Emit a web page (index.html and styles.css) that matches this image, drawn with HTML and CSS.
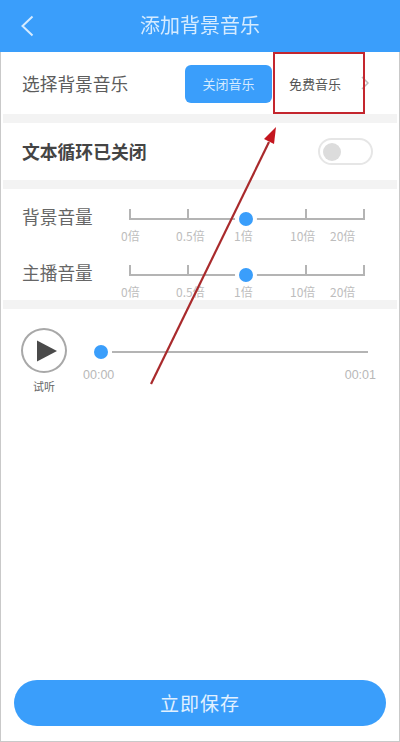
FILE: index.html
```html
<!DOCTYPE html>
<html lang="zh">
<head>
<meta charset="utf-8">
<title>添加背景音乐</title>
<link rel="stylesheet" href="styles.css">
</head>
<body>
<div class="app">
  <header class="topbar">
    <svg class="back" width="14" height="22" viewBox="0 0 14 22"><path d="M12.5 1.5 2.5 11l10 9.500" fill="none" stroke="#d5ebff" stroke-width="2"/></svg>
    <h1 class="title">添加背景音乐</h1>
  </header>

  <section class="row music">
    <span class="label">选择背景音乐</span>
    <span class="off-btn">关闭音乐</span>
    <span class="free">免费音乐</span>
    <svg class="chev" width="8" height="14" viewBox="0 0 8 14"><path d="M1 1l6 6-6 6" fill="none" stroke="#bbb" stroke-width="1.500"/></svg>
  </section>

  <section class="row loop">
    <span class="label strong">文本循环已关闭</span>
    <span class="switch"><i class="switch-dot"></i></span>
  </section>

  <section class="volumes">
    <div class="vol">
      <span class="label vol-label">背景音量</span>
      <div class="scale">
        <div class="track">
          <i class="tick t0"></i><i class="tick t1"></i><i class="tick t3"></i><i class="tick t4"></i>
          <i class="knob"></i>
        </div>
        <div class="marks"><span class="m0">0倍</span><span class="m1">0.5倍</span><span class="m2">1倍</span><span class="m3">10倍</span><span class="m4">20倍</span></div>
      </div>
    </div>
    <div class="vol">
      <span class="label vol-label">主播音量</span>
      <div class="scale">
        <div class="track">
          <i class="tick t0"></i><i class="tick t1"></i><i class="tick t3"></i><i class="tick t4"></i>
          <i class="knob"></i>
        </div>
        <div class="marks"><span class="m0">0倍</span><span class="m1">0.5倍</span><span class="m2">1倍</span><span class="m3">10倍</span><span class="m4">20倍</span></div>
      </div>
    </div>
  </section>

  <section class="player">
    <div class="listen">
      <span class="play"><svg width="22" height="24" viewBox="0 0 22 24"><path d="M1 1.500 21 12 1 22.500z" fill="#4a4a4a"/></svg></span>
      <span class="listen-text">试听</span>
    </div>
    <div class="progress">
      <div class="bar"><i class="bar-knob"></i><i class="bar-line"></i></div>
      <div class="times"><span>00:00</span><span>00:01</span></div>
    </div>
  </section>

  <div class="spacer"></div>
  <div class="save">立即保存</div>

  <div class="red-box"></div>
  <svg class="arrow" width="400" height="742" viewBox="0 0 400 742">
    <path d="M151 384 269 142" stroke="#a92a2c" stroke-width="2.200" fill="none"/>
    <path d="M276 127 264 139 274 144z" fill="#c4161f"/>
  </svg>
</div>
</body>
</html>
```

FILE: styles.css
```css
* { box-sizing: border-box; }
html, body { margin: 0; padding: 0; }
body { width: 400px; height: 742px; overflow: hidden; background: #fff; }
.app {
  position: relative;
  width: 400px;
  height: 742px;
  display: flex;
  flex-direction: column;
  background: #fff;
  border-left: 1px solid #c9c9c9;
  border-right: 1px solid #c9c9c9;
  border-bottom: 1px solid #c9c9c9;
  font-family: "Noto Sans CJK SC", "Noto Sans", sans-serif;
  color: #555;
  filter: blur(0.5px);
}
.topbar {
  height: 52px;
  margin: 0 -1px;
  flex: none;
  background: #3a9efb;
  display: flex;
  align-items: center;
  justify-content: center;
  position: relative;
}
.back { position: absolute; left: 20px; top: 15px; }
.title { margin: 0; font-size: 20px; font-weight: 400; color: #d5ebff; line-height: 52px; position: relative; top: -1px; left: 0; }
.row { display: flex; align-items: center; padding-left: 21px; flex: none; }
.label { font-size: 17.700px; line-height: 24px; color: #5c5c5c; }
.strong { font-weight: 700; color: #444; font-size: 17.800px; position: relative; top: -1px; }
.music { height: 62px; }
.music .label { width: 163px; }
.off-btn {
  width: 87px;
  height: 38px;
  margin-top: 1px;
  background: #3a9efb;
  color: #d5ebff;
  border-radius: 6px;
  font-size: 13px;
  display: flex;
  align-items: center;
  justify-content: center;
}
.free { font-size: 13px; margin-left: 17px; width: 53px; white-space: nowrap; color: #555; }
.chev { margin-left: 19px; }
.loop {
  height: 75px;
  border-top: 9px solid #f3f3f3;
  border-bottom: 9px solid #f3f3f3;
  justify-content: space-between;
  padding-right: 24px;
  margin-left: 2px;
  margin-right: 2px;
  padding-left: 19px;
}
.switch {
  width: 55px;
  height: 27px;
  border: 2px solid #e6e6e6;
  border-radius: 14px;
  display: flex;
  align-items: center;
  padding-left: 3px;
}
.switch-dot { width: 18px; height: 18px; border-radius: 50%; background: #dcdcdc; }
.volumes { height: 111px; flex: none; padding-left: 21px; }
.vol { height: 56px; display: flex; position: relative; }
.vol-label { width: 107px; padding-top: 15px; line-height: 24px; height: 41px; color: #666; box-sizing: content-box; }
.scale { width: 240px; position: relative; }
.track {
  position: relative;
  height: 2px;
  width: 236px;
  margin-top: 29px;
  background: #b4b4b4;
}
.tick { position: absolute; bottom: 0; width: 2px; height: 11px; background: #b4b4b4; }
.t0 { left: 0; }
.t1 { left: 58px; }
.t3 { left: 176px; }
.t4 { left: 234px; }
.knob {
  position: absolute;
  left: 106px;
  top: -10px;
  width: 22px;
  height: 22px;
  border-radius: 50%;
  background: #3a9efb;
  border: 4px solid #fff;
}
.marks { position: relative; height: 18px; margin-top: 7px; font-size: 12px; line-height: 18px; color: #bdbdbd; white-space: nowrap; }
.marks span { position: absolute; top: 0; }
.m0 { left: -8px; }
.m1 { left: 47px; }
.m2 { left: 105px; }
.m3 { left: 161px; }
.m4 { left: 201px; }
.player {
  height: 106px;
  flex: none;
  margin: 0 2px;
  border-top: 9px solid #f3f3f3;
  padding: 19px 0 0 18px;
  display: flex;
}
.listen { width: 46px; display: flex; flex-direction: column; align-items: center; }
.play {
  width: 46px;
  height: 45px;
  border: 2px solid #a8a8a8;
  border-radius: 50%;
  display: flex;
  align-items: center;
  justify-content: center;
  padding-left: 5px;
}
.listen-text { font-size: 11px; line-height: 14px; margin-top: 6px; color: #666; }
.progress { width: 293px; margin-left: 16px; }
.bar { display: flex; align-items: center; height: 14px; margin-top: 17px; padding-left: 11px; }
.bar-knob { width: 14px; height: 14px; border-radius: 50%; background: #3a9efb; flex: none; }
.bar-line { width: 256px; height: 2px; margin-left: 4px; background: #b4b4b4; flex: none; }
.times { display: flex; justify-content: space-between; font-size: 12.500px; line-height: 16px; margin-top: 8px; color: #b8b8b8; font-family: "Liberation Sans", sans-serif; }
.spacer { flex: 1; }
.save {
  flex: none;
  height: 46px;
  margin: 0 13px 15px;
  border-radius: 23px;
  background: #3a9efb;
  color: #e2f1ff;
  font-size: 19px;
  letter-spacing: 1px;
  display: flex;
  align-items: center;
  justify-content: center;
  padding-bottom: 1px;
}
.red-box { position: absolute; left: 272px; top: 52px; width: 92px; height: 62px; border: 2px solid #c4262e; }
.arrow { position: absolute; left: -1px; top: 0; pointer-events: none; }
```
